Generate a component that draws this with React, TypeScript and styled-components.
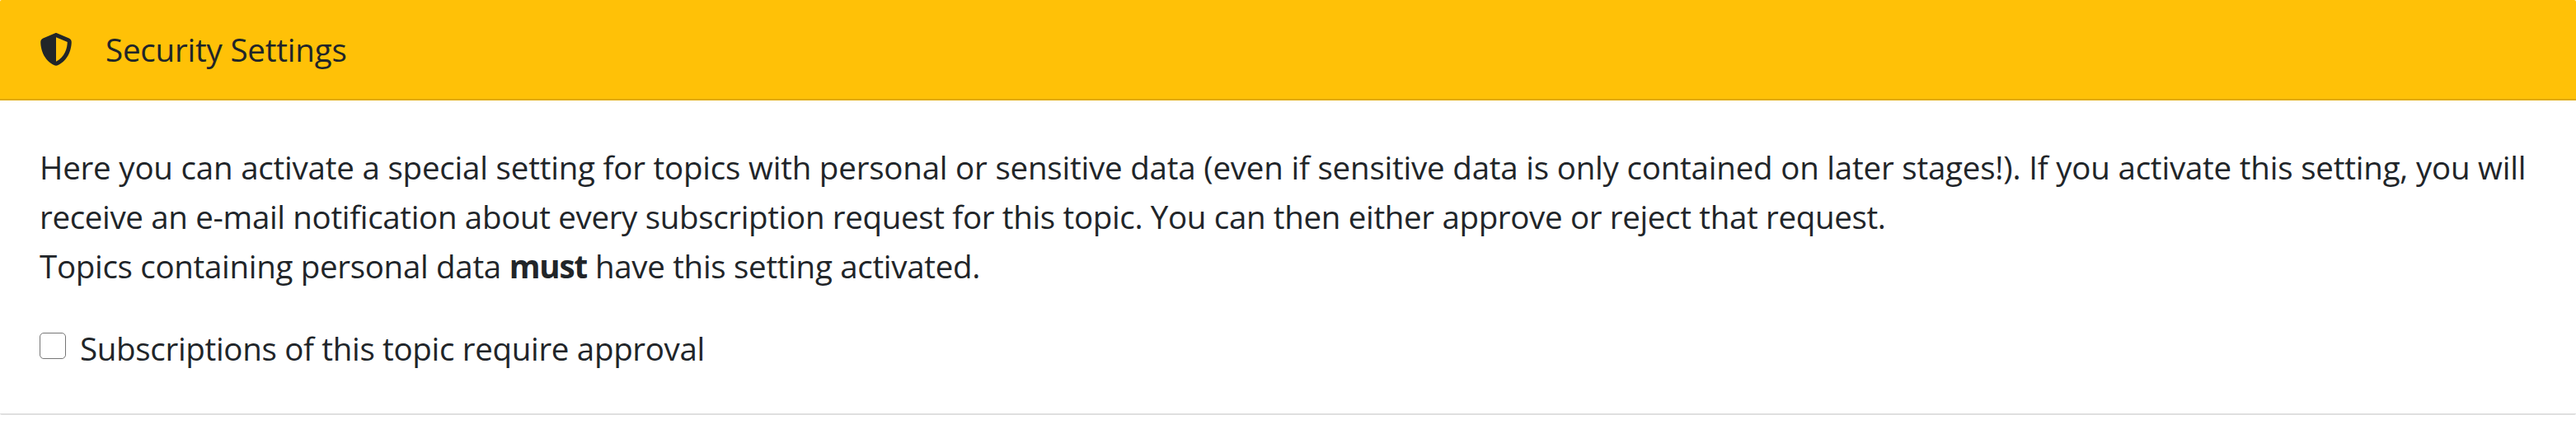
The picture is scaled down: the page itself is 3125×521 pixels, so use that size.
import React from "react";
import styled, { createGlobalStyle } from "styled-components";
import { FaShieldHalved } from "react-icons/fa6";

const GlobalStyle = createGlobalStyle`
  * { box-sizing: border-box; }
  body {
    margin: 0;
    background: #fff;
    color: #212529;
    font-family: "Open Sans", "Noto Sans", sans-serif;
    font-size: 38.5px;
    line-height: 60px;
    overflow: hidden;
  }
`;

const Card = styled.section`
  display: flex;
  flex-direction: column;
  height: 504px;
  border-bottom: 2px solid #dfdfdf;
  border-radius: 2px;
  overflow: hidden;
`;

const Header = styled.header`
  display: flex;
  align-items: center;
  gap: 40px;
  height: 122px;
  padding: 0 48px;
  background: #ffc107;
  border-bottom: 2px solid #dfa906;
`;

const ShieldIcon = styled(FaShieldHalved)`
  width: 40px;
  height: 40px;
`;

const Line = styled.span<{ $tracking: number }>`
  display: block;
  white-space: nowrap;
  width: max-content;
  letter-spacing: ${(p) => p.$tracking}px;
`;

const Strong = styled.strong`
  font-weight: 700;
  letter-spacing: -1.1px;
`;

const Body = styled.div`
  display: flex;
  flex-direction: column;
  gap: 40px;
  padding: 51px 48px 0;
`;

const Description = styled.p`
  margin: 0;
`;

const Approval = styled.label`
  display: flex;
  align-items: center;
  gap: 17px;
`;

const Checkbox = styled.input`
  appearance: none;
  width: 32px;
  height: 32px;
  margin: 0 0 6px;
  border: 1px solid #767676;
  border-radius: 5px;
  background: #fff;
`;

export default function App() {
  return (
    <>
      <GlobalStyle />
      <Card>
        <Header>
          <ShieldIcon />
          <Line $tracking={-0.2}>Security Settings</Line>
        </Header>
        <Body>
          <Description>
            <Line $tracking={-0.21}>
              Here you can activate a special setting for topics with personal or sensitive data (even if
              sensitive data is only contained on later stages!). If you activate this setting, you will
            </Line>
            <Line $tracking={-0.34}>
              receive an e-mail notification about every subscription request for this topic. You can then
              either approve or reject that request.
            </Line>
            <Line $tracking={-0.31}>
              Topics containing personal data <Strong>must</Strong> have this setting activated.
            </Line>
          </Description>
          <Approval>
            <Checkbox type="checkbox" />
            <Line $tracking={-0.32}>Subscriptions of this topic require approval</Line>
          </Approval>
        </Body>
      </Card>
    </>
  );
}
